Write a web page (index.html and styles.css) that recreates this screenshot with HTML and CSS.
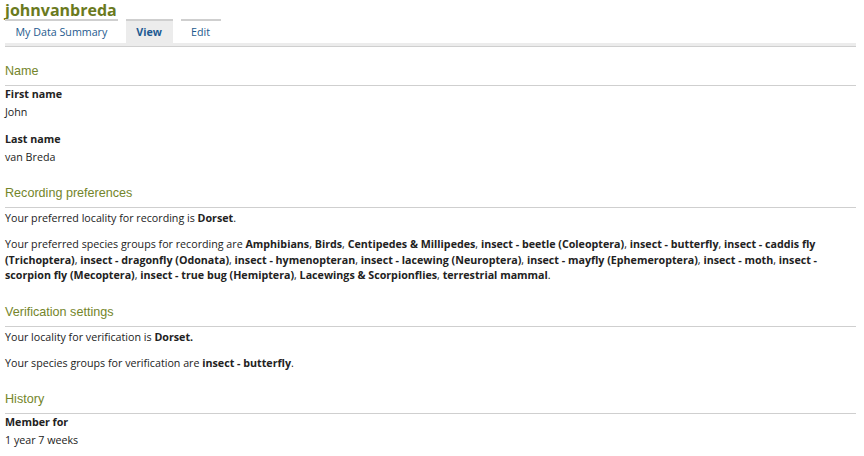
FILE: index.html
```html
<!DOCTYPE html>
<html>
<head>
<meta charset="utf-8">
<link rel="stylesheet" href="styles.css">
</head>
<body>
<div class="page">
  <h1 class="title">johnvanbreda</h1>
  <ul class="tabs">
    <li class="tab"><a href="#">My Data Summary</a></li>
    <li class="tab active"><a href="#">View</a></li>
    <li class="tab"><a href="#">Edit</a></li>
  </ul>
  <div class="tabbar"></div>

  <section class="group first">
    <h2 class="group-title">Name</h2>
    <div class="field">
      <div class="label">First name</div>
      <div class="value">John</div>
    </div>
    <div class="field">
      <div class="label">Last name</div>
      <div class="value">van Breda</div>
    </div>
  </section>

  <section class="group">
    <h2 class="group-title">Recording preferences</h2>
    <p class="text">Your preferred locality for recording is <b>Dorset</b>.</p>
    <p class="text">Your preferred species groups for recording are <b>Amphibians</b>, <b>Birds</b>, <b>Centipedes &amp; Millipedes</b>, <b>insect - beetle (Coleoptera)</b>, <b>insect - butterfly</b>, <b>insect - caddis fly (Trichoptera)</b>, <b>insect - dragonfly (Odonata)</b>, <b>insect - hymenopteran</b>, <b>insect - lacewing (Neuroptera)</b>, <b>insect - mayfly (Ephemeroptera)</b>, <b>insect - moth</b>, <b>insect - scorpion fly (Mecoptera)</b>, <b>insect - true bug (Hemiptera)</b>, <b>Lacewings &amp; Scorpionflies</b>, <b>terrestrial mammal</b>.</p>
  </section>

  <section class="group">
    <h2 class="group-title">Verification settings</h2>
    <p class="text">Your locality for verification is <b>Dorset.</b></p>
    <p class="text">Your species groups for verification are <b>insect - butterfly</b>.</p>
  </section>

  <section class="group">
    <h2 class="group-title">History</h2>
    <div class="field">
      <div class="label">Member for</div>
      <div class="value">1 year 7 weeks</div>
    </div>
  </section>
</div>
</body>
</html>
```

FILE: styles.css
```css
* { box-sizing: border-box; }
html, body { margin: 0; padding: 0; background: #fff; }
body {
  font-family: "Open Sans", "Liberation Sans", sans-serif;
  font-size: 10.7px;
  line-height: 16px;
  color: #222;
}
.page {
  padding: 0 8px 0 5px;
}
.title {
  margin: 0;
  padding-top: 1px;
  font-size: 16px;
  line-height: 18px;
  font-weight: 700;
  color: #6a7a1e;
}
.tabs {
  list-style: none;
  margin: 0;
  padding: 0;
  display: flex;
  gap: 8px;
}
.tab {
  border-top: 2px solid #cfcfcf;
}
.tab a {
  display: block;
  padding: 0 10.5px;
  line-height: 22px;
  text-decoration: none;
  color: #1e5a8e;
}
.tab.active {
  background: #ececec;
}
.tab.active a {
  font-weight: 700;
  color: #1d5a92;
}
.tabbar {
  height: 4px;
  background: #ececec;
  border-bottom: 1px solid #cfcfcf;
}
.group {
  margin-top: 20px;
}
.group.first { margin-top: 16px; }
.group-title {
  margin: 0;
  font-family: "Liberation Sans", Arial, sans-serif;
  font-weight: 400;
  font-size: 12.6px;
  line-height: 17px;
  padding-bottom: 5px;
  color: #74852a;
  border-bottom: 1px solid #cfcfcf;
}
.field { margin-bottom: 11px; }
.label { font-weight: 700; }
.value { margin-top: 2px; }
.text { margin: 10.5px 0 0; line-height: 15.5px; }
.group-title + .text { margin-top: 3px; }
```
